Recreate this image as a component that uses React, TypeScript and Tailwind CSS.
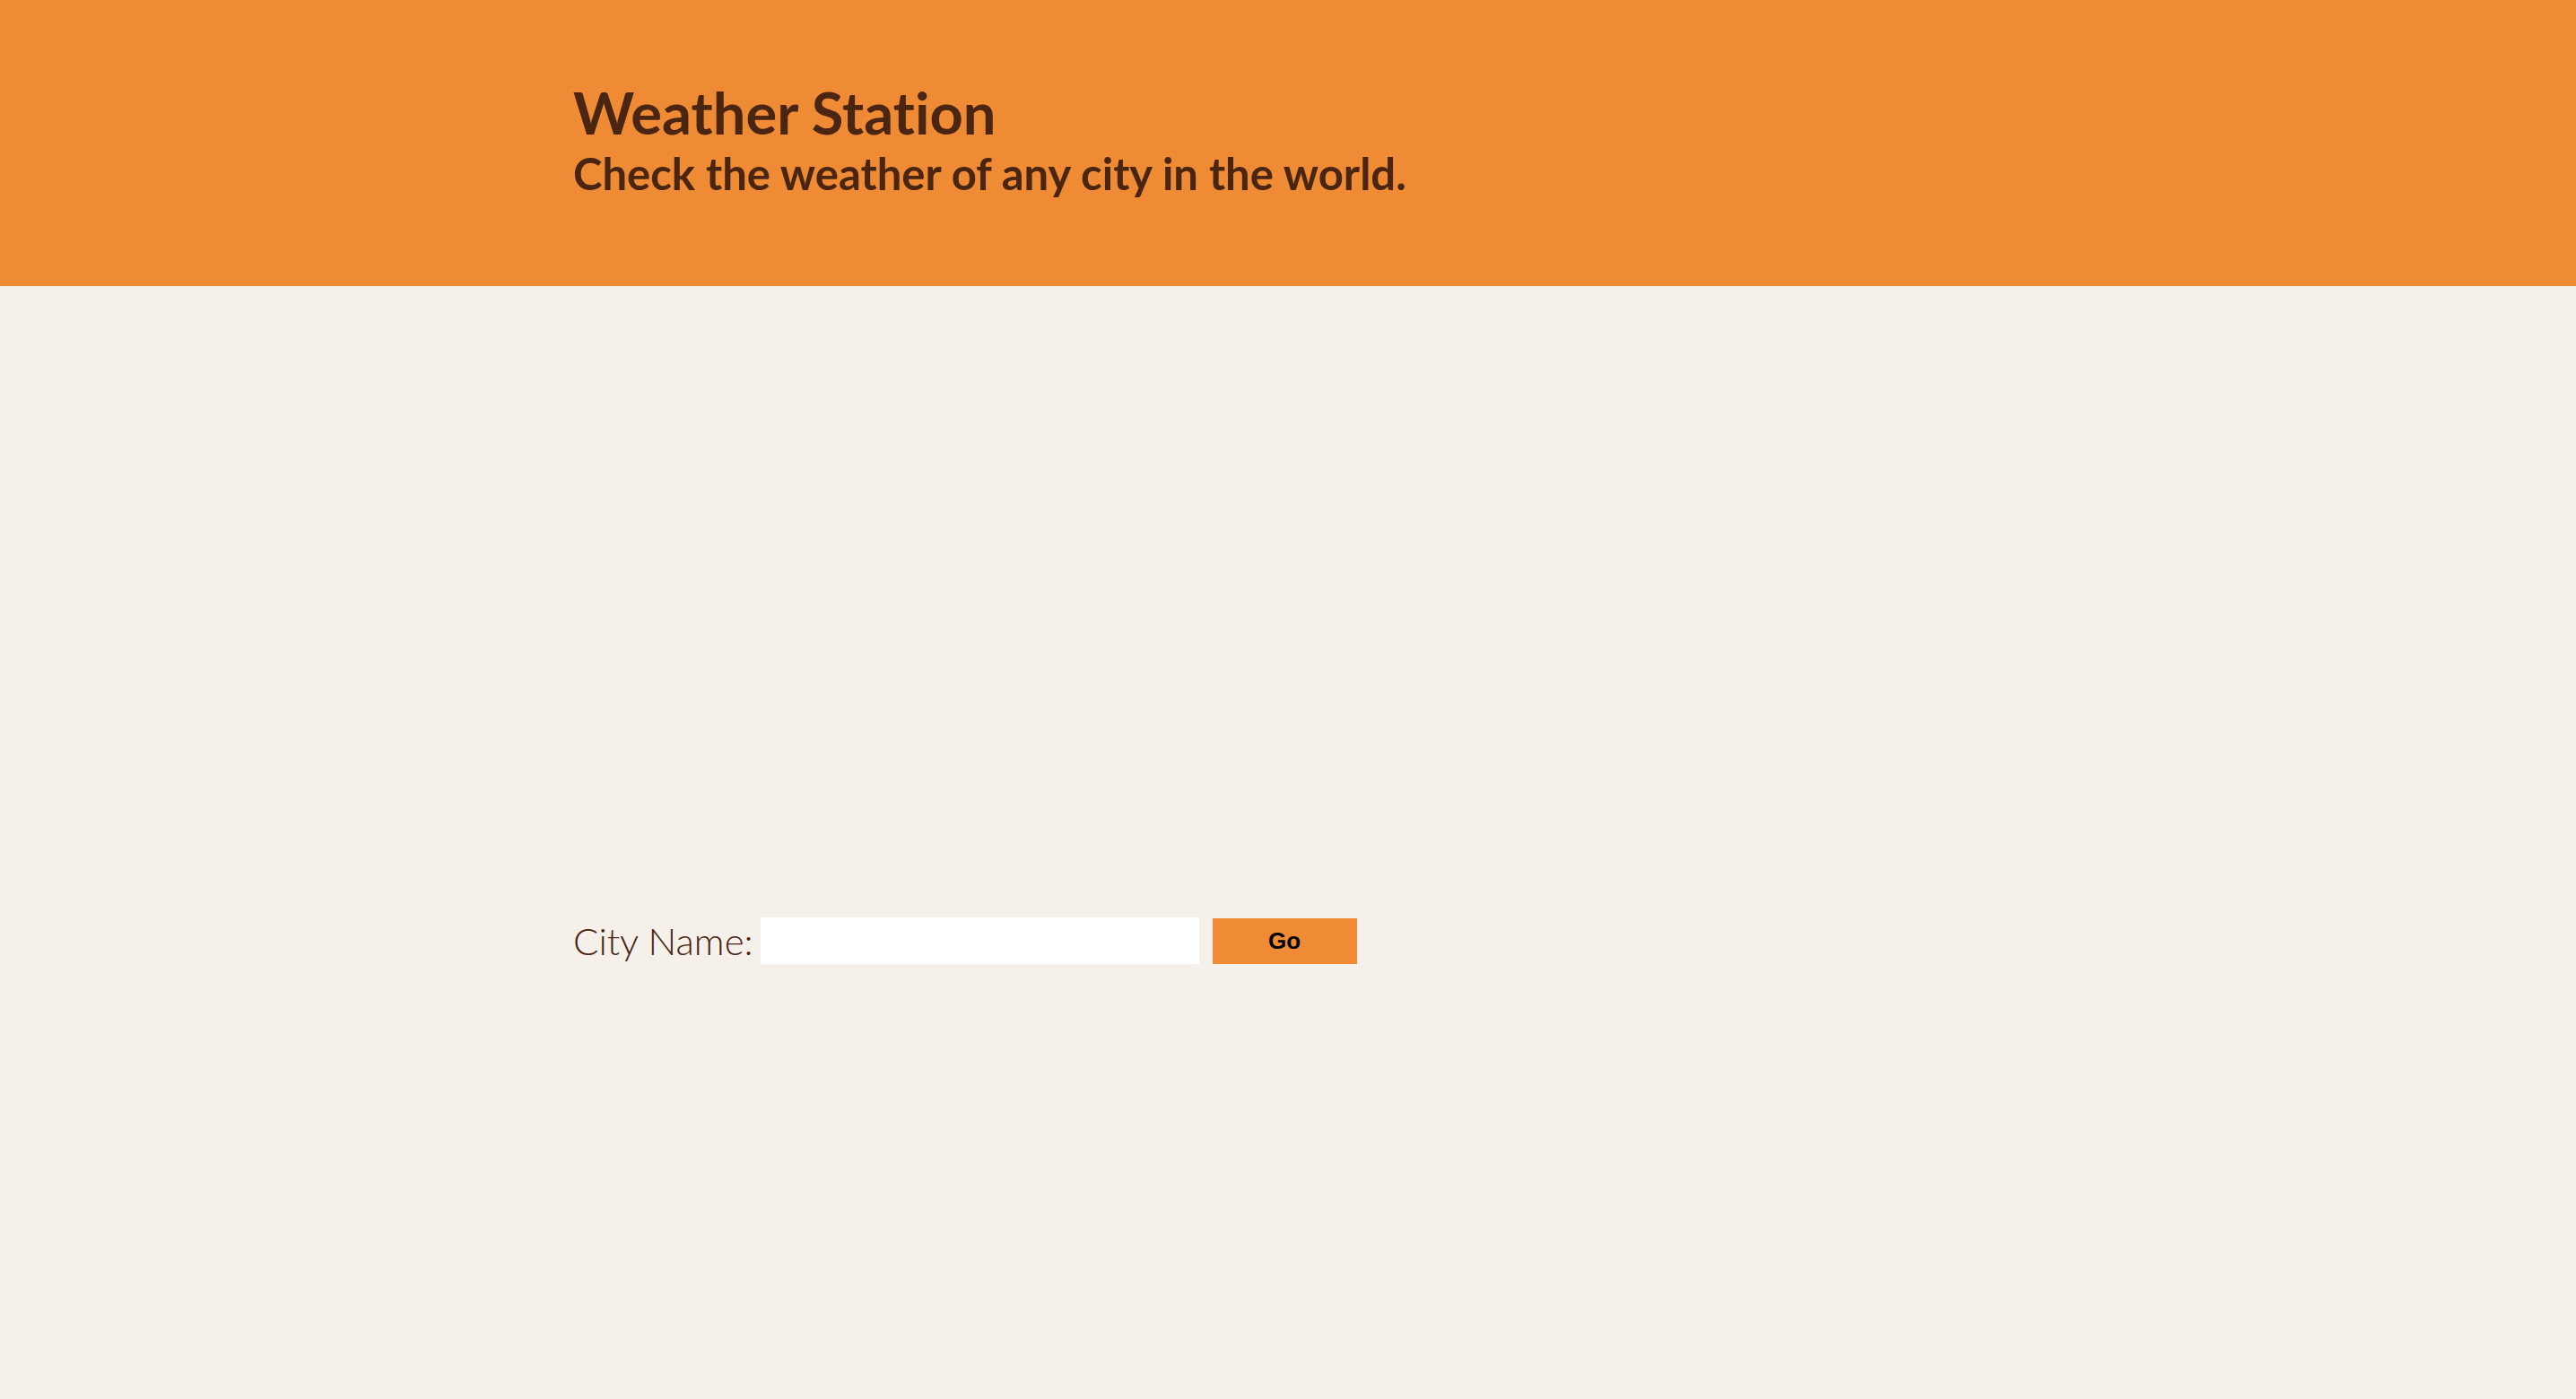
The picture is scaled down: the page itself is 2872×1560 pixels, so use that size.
export default function App() {
  return (
    <div className="min-h-[1560px] bg-[#f5f0ea] font-['Lato',sans-serif] text-[#4a2511] [font-variant-ligatures:none]">
      <header className="h-[319px] bg-[#f08b35] pl-[639px] pt-[93px]">
        <h1 className="text-[65px] font-bold leading-none">Weather Station</h1>
        <p className="mt-[11px] text-[49px] font-bold leading-none">Check the weather of any city in the world.</p>
      </header>
      <main className="pl-[639px] pt-[704px]">
        <form className="flex items-center" onSubmit={(e) => e.preventDefault()}>
          <label htmlFor="city" className="text-[42px] font-light leading-none">City Name:</label>
          <input id="city" type="text" className="ml-[8px] h-[52px] w-[489px] bg-white outline-none" />
          <button
            type="submit"
            className="ml-[15px] h-[51px] w-[161px] bg-[#f08b35] font-['Liberation_Sans',sans-serif] text-[26px] font-bold text-black"
          >
            Go
          </button>
        </form>
      </main>
    </div>
  )
}
